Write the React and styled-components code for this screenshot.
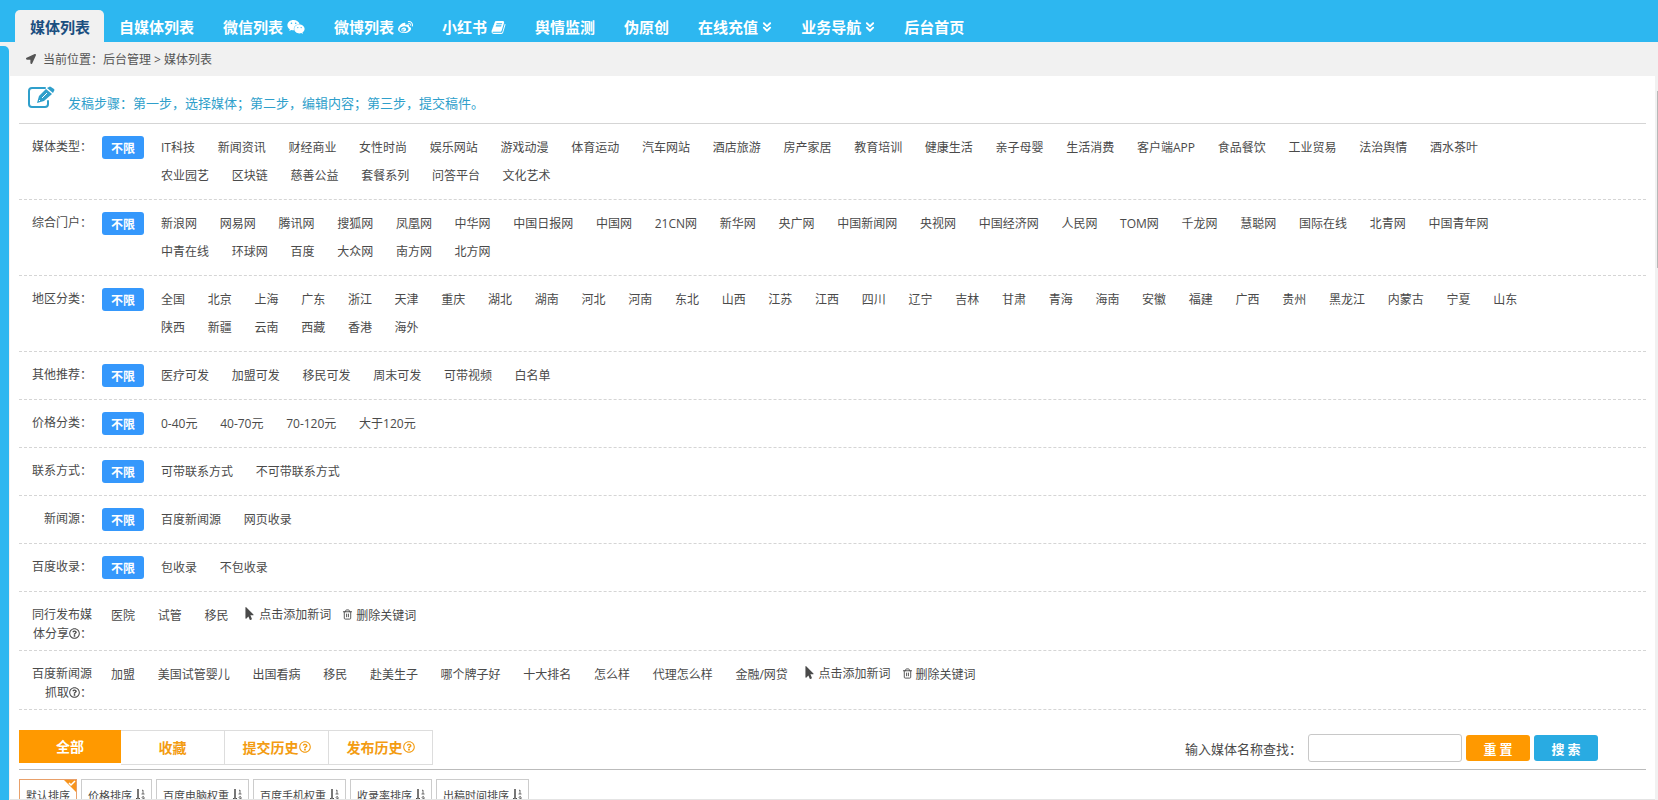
import React, { useState } from 'react'
import styled, { createGlobalStyle } from 'styled-components'
import { ChevronsDown, Trash2 } from 'lucide-react'
import {
  FaWeixin,
  FaWeibo,
  FaLocationArrow,
  FaRegQuestionCircle,
  FaMousePointer,
} from 'react-icons/fa'

const navItems = [
  { name: '媒体列表' },
  { name: '自媒体列表' },
  { name: '微信列表', icon: <FaWeixin size={18} /> },
  { name: '微博列表', icon: <FaWeibo size={15} /> },
  { name: '小红书', icon: <BookIcon /> },
  { name: '舆情监测' },
  { name: '伪原创' },
  { name: '在线充值', icon: <ChevronsDown size={10} strokeWidth={3} viewBox="4 4 16 16" /> },
  { name: '业务导航', icon: <ChevronsDown size={10} strokeWidth={3} viewBox="4 4 16 16" /> },
  { name: '后台首页' },
]

const filters = [
  {
    label: '媒体类型',
    items: 'IT科技 新闻资讯 财经商业 女性时尚 娱乐网站 游戏动漫 体育运动 汽车网站 酒店旅游 房产家居 教育培训 健康生活 亲子母婴 生活消费 客户端APP 食品餐饮 工业贸易 法治舆情 酒水茶叶 农业园艺 区块链 慈善公益 套餐系列 问答平台 文化艺术',
  },
  {
    label: '综合门户',
    items: '新浪网 网易网 腾讯网 搜狐网 凤凰网 中华网 中国日报网 中国网 21CN网 新华网 央广网 中国新闻网 央视网 中国经济网 人民网 TOM网 千龙网 慧聪网 国际在线 北青网 中国青年网 中青在线 环球网 百度 大众网 南方网 北方网',
  },
  {
    label: '地区分类',
    items: '全国 北京 上海 广东 浙江 天津 重庆 湖北 湖南 河北 河南 东北 山西 江苏 江西 四川 辽宁 吉林 甘肃 青海 海南 安徽 福建 广西 贵州 黑龙江 内蒙古 宁夏 山东 陕西 新疆 云南 西藏 香港 海外',
  },
  { label: '其他推荐', items: '医疗可发 加盟可发 移民可发 周末可发 可带视频 白名单' },
  { label: '价格分类', items: '0-40元 40-70元 70-120元 大于120元' },
  { label: '联系方式', items: '可带联系方式 不可带联系方式' },
  { label: '新闻源', items: '百度新闻源 网页收录' },
  { label: '百度收录', items: '包收录 不包收录' },
]

const keywordRows = [
  { label: '同行发布媒体分享', items: '医院 试管 移民' },
  { label: '百度新闻源抓取', items: '加盟 美国试管婴儿 出国看病 移民 赴美生子 哪个牌子好 十大排名 怎么样 代理怎么样 金融/网贷' },
]

const tabs = [
  { name: '全部' },
  { name: '收藏' },
  { name: '提交历史', help: true },
  { name: '发布历史', help: true },
]

const sorts = ['默认排序', '价格排序', '百度电脑权重', '百度手机权重', '收录率排序', '出稿时间排序']

function BookIcon() {
  return (
    <svg width="15" height="15" viewBox="0 0 1792 1792" fill="currentColor">
      <path d="M1703 478q40 57 18 129l-275 906q-19 64-76.5 107.5t-122.5 43.5h-923q-77 0-148.5-53.5t-99.5-131.5q-24-67-2-127 0-4 3-27t4-37q1-8-3-21.5t-3-19.5q2-11 8-21t16.5-23.5 16.500-23.500q23-38 45-91.500t30-91.500q3-10 .5-30t-.5-28q3-11 17-28t17-23q21-36 42-92t25-90q1-9-2.500-32t.5-28q4-13 22-30.500t22-22.500q19-26 42.500-84.500t27.500-96.500q1-8-3-25.500t-2-26.500q2-8 9-18t18-23 17-21q8-12 16.500-30.500t15-35 16-36 19.500-32 26.500-23.500 36-11.500 47.500 5.500l-1 3q38-9 51-9h761q74 0 114 56t18 130l-274 906q-36 119-71.500 153.500t-128.500 34.500h-869q-27 0-38 15-11 16-1 43 24 70 144 70h923q29 0 56-15.500t35-41.500l300-987q7-22 5-57 38 15 59 43zm-1064 2q-4 13 2 22.500t20 9.500h608q13 0 25.500-9.500t16.500-22.500l21-64q4-13-2-22.500t-20-9.500h-608q-13 0-25.500 9.500t-16.500 22.500zm-83 256q-4 13 2 22.500t20 9.500h608q13 0 25.500-9.500t16.500-22.500l21-64q4-13-2-22.500t-20-9.500h-608q-13 0-25.500 9.500t-16.500 22.500z" />
    </svg>
  )
}

function EditIcon() {
  return (
    <svg width="28" height="24" viewBox="0 0 28 24" fill="none" stroke="currentColor">
      <path d="M18 2H5Q2 2 2 5V18Q2 21 5 21H18Q21 21 21 18V15" strokeWidth="2" strokeLinecap="round" />
      <path d="M10 17L12 10L19 3L25 8L17 15Z" fill="currentColor" stroke="none" />
      <path d="M20 2L22 1Q23 0 24 1L27 3Q28 4 27 5L26 7Z" fill="currentColor" stroke="none" />
      <path d="M12 14L13 15M15 12L20 7" stroke="#fff" strokeWidth="1" />
    </svg>
  )
}

function SortIcon() {
  return (
    <svg width="10" height="12" viewBox="0 0 10 12" fill="none" stroke="currentColor">
      <path d="M3 0V11" strokeWidth="1.5" />
      <path d="M1 9L3 11L5 9" />
      <path d="M7 1.500L8 1V5M6.500 5H9.500" strokeWidth="0.8" />
      <path d="M9 9A1 1 0 1 1 9 8V10Q9 11.500 7 11.500" strokeWidth="0.8" />
    </svg>
  )
}

function FilterRow({ label, items }) {
  const [picked, setPicked] = useState('')

  return (
    <Row>
      <Label>{label}：</Label>
      <Badge type="button" onClick={() => setPicked('')}>不限</Badge>
      <Items>
        {items.split(' ').map((item) => (
          <React.Fragment key={item}>
            <Item href="#" $on={picked === item} onClick={() => setPicked(item)}>{item}</Item>{' '}
          </React.Fragment>
        ))}
      </Items>
    </Row>
  )
}

function KeywordRow({ label, items }) {
  return (
    <Row>
      <Label>{label}<FaRegQuestionCircle size={11} />：</Label>
      <Keywords>
        {items.split(' ').map((item) => (
          <React.Fragment key={item}>
            <Item href="#">{item}</Item>{' '}
          </React.Fragment>
        ))}
        <Action type="button"><FaMousePointer size={13} />点击添加新词</Action>
        <Action type="button"><Trash2 size={11} />删除关键词</Action>
      </Keywords>
    </Row>
  )
}

function App() {
  const [nav, setNav] = useState('媒体列表')
  const [tab, setTab] = useState('全部')
  const [sort, setSort] = useState('默认排序')
  const [word, setWord] = useState('')

  return (
    <Page>
      <GlobalStyle />
      <Nav>
        {navItems.map((n) => (
          <NavLink key={n.name} href="#" $active={nav === n.name} onClick={() => setNav(n.name)}>
            {n.name}
            {n.icon}
          </NavLink>
        ))}
      </Nav>
      <Body>
        <Side />
        <Main>
          <Crumbs>
            <FaLocationArrow size={10} />
            <span>当前位置：后台管理 &gt; 媒体列表</span>
          </Crumbs>
          <Scroller>
            <Content>
              <Notice>
                <EditIcon />
                <p>发稿步骤：第一步，选择媒体；第二步，编辑内容；第三步，提交稿件。</p>
              </Notice>
              {filters.map((f) => <FilterRow key={f.label} {...f} />)}
              {keywordRows.map((k) => <KeywordRow key={k.label} {...k} />)}
              <Toolbar>
                <Tabs>
                  {tabs.map((t) => (
                    <Tab key={t.name} type="button" $active={tab === t.name} onClick={() => setTab(t.name)}>
                      {t.name}
                      {t.help && <FaRegQuestionCircle size={12} />}
                    </Tab>
                  ))}
                </Tabs>
                <Search onSubmit={(e) => e.preventDefault()}>
                  <label htmlFor="word">输入媒体名称查找：</label>
                  <input id="word" type="text" value={word} onChange={(e) => setWord(e.target.value)} />
                  <SearchBtn type="button" $color="#ff9900" onClick={() => setWord('')}>重 置</SearchBtn>
                  <SearchBtn type="submit" $color="#29abe2">搜 索</SearchBtn>
                </Search>
              </Toolbar>
              <Sorts>
                {sorts.map((s, i) => (
                  <Sort key={s} type="button" $active={sort === s} onClick={() => setSort(s)}>
                    {s}
                    {i > 0 && <SortIcon />}
                    {sort === s && (
                      <Corner width="12" height="12" viewBox="0 0 12 12">
                        <path d="M0 0H12V12Z" fill="#f7941d" />
                        <path d="M5 3L7 5L11 1" fill="none" stroke="#fff" strokeWidth="1.5" />
                      </Corner>
                    )}
                  </Sort>
                ))}
              </Sorts>
            </Content>
            <Gutter><Thumb /></Gutter>
          </Scroller>
        </Main>
      </Body>
    </Page>
  )
}

export default App

const GlobalStyle = createGlobalStyle`
  * {
    box-sizing: border-box;
  }
  body {
    margin: 0;
    overflow: hidden;
  }
  body, button, input {
    font-family: "Noto Sans CJK SC", "Open Sans", sans-serif;
    font-size: 12px;
    color: #4a4a4a;
  }
  a {
    text-decoration: none;
  }
  button {
    cursor: pointer;
  }
`;
const Page = styled.div`
  height: 100vh;
  display: flex;
  flex-direction: column;
  background: #f1f1f1;
`;
const Nav = styled.nav`
  display: flex;
  flex: none;
  padding: 10px 15px 0;
  background: #2db7f0;
`;
const NavLink = styled.a`
  display: flex;
  align-items: center;
  gap: 4px;
  height: 32px;
  padding: 2px 14px 0 15px;
  border-radius: 5px 5px 0 0;
  font-size: 15px;
  line-height: 20px;
  font-weight: bold;
  white-space: nowrap;
  color: ${(p) => (p.$active ? '#1b4f80' : '#fff')};
  background: ${(p) => (p.$active ? '#f1f1f1' : 'transparent')};
`;
const Body = styled.div`
  flex: 1;
  min-height: 0;
  display: flex;
`;
const Side = styled.div`
  flex: none;
  width: 9px;
  margin-top: 4px;
  border-radius: 0 5px 0 0;
  background: #2db7f0;
`;
const Main = styled.main`
  flex: 1;
  min-width: 0;
  display: flex;
  flex-direction: column;
`;
const Crumbs = styled.div`
  flex: none;
  display: flex;
  align-items: center;
  gap: 7px;
  height: 34px;
  padding: 0 0 1px 17px;
  font-family: "Open Sans", "Noto Sans CJK SC", sans-serif;
  color: #555;
`;
const Scroller = styled.div`
  flex: 1;
  min-height: 0;
  display: flex;
`;
const Content = styled.div`
  flex: 1;
  min-width: 0;
  overflow: hidden;
  margin-left: 1px;
  padding: 0 9px;
  background: #fff;
  border-bottom: 1px solid #e4e4e4;
`;
const Gutter = styled.div`
  flex: none;
  width: 3px;
  padding: 15px 0 0 2px;
`;
const Thumb = styled.div`
  height: 25%;
  background: #b8b8b8;
`;
const Notice = styled.div`
  display: flex;
  gap: 13px;
  height: 48px;
  padding: 10px 8px 0;
  border-bottom: 1px solid #d5d5d5;
  color: #2f9fcb;
  p {
    margin: 7px 0 0;
    font-size: 13px;
    line-height: 20px;
  }
`;
const Row = styled.div`
  display: flex;
  align-items: flex-start;
  padding: 9px 0 8px 11px;
  border-bottom: 1px dashed #d5d5d5;
`;
const Label = styled.div`
  flex: none;
  width: 62px;
  padding-top: 3px;
  text-align: right;
  line-height: 19px;
  svg {
    vertical-align: -1px;
  }
`;
const Badge = styled.button`
  flex: none;
  width: 42px;
  height: 23px;
  margin: 3px 0 0 10px;
  padding: 0;
  border: 0;
  border-radius: 3px;
  font-weight: bold;
  line-height: 23px;
  color: #fff;
  background: #3598fc;
`;
const Items = styled.div`
  flex: 1;
  min-width: 0;
  margin: 0 106px 0 7px;
  padding-bottom: 2px;
  line-height: 28px;
`;
const Keywords = styled.div`
  flex: 1;
  min-width: 0;
  margin-left: 9px;
  line-height: 28px;
`;
const Item = styled.a`
  display: inline-block;
  padding: 0 10px;
  font-family: "Open Sans", "Noto Sans CJK SC", sans-serif;
  line-height: 24px;
  color: ${(p) => (p.$on ? '#3598fc' : '#4a4a4a')};
`;
const Action = styled.button`
  display: inline-flex;
  align-items: center;
  gap: 3px;
  margin-right: 9px;
  padding: 0 0 2px 2px;
  border: 0;
  background: none;
  line-height: 18px;
`;
const Toolbar = styled.div`
  display: flex;
  justify-content: space-between;
  height: 60px;
  padding: 20px 48px 0 0;
  border-bottom: 1px solid #bbb;
`;
const Tabs = styled.div`
  display: flex;
  align-items: flex-start;
`;
const Tab = styled.button`
  display: flex;
  align-items: center;
  justify-content: center;
  width: ${(p) => (p.$active ? '102px' : '104px')};
  height: ${(p) => (p.$active ? '33px' : '35px')};
  padding: 0 0 2px;
  border: solid #ddd;
  border-width: ${(p) => (p.$active ? '0' : '1px 1px 1px 0')};
  font-size: 14px;
  font-weight: bold;
  color: ${(p) => (p.$active ? '#fff' : '#f39c12')};
  background: ${(p) => (p.$active ? '#ff9900' : '#fff')};
`;
const Search = styled.form`
  display: flex;
  align-items: center;
  height: 36px;
  label {
    margin-right: 6px;
    font-size: 13px;
  }
  input {
    width: 154px;
    height: 28px;
    padding: 0 6px;
    border: 1px solid #c8c8c8;
    border-radius: 3px;
  }
`;
const SearchBtn = styled.button`
  width: 64px;
  height: 26px;
  margin-left: 4px;
  padding: 0;
  border: 0;
  border-radius: 3px;
  font-size: 13px;
  font-weight: bold;
  color: #fff;
  background: ${(p) => p.$color};
`;
const Sorts = styled.div`
  display: flex;
  gap: 4px;
  padding-top: 9px;
`;
const Sort = styled.button`
  position: relative;
  display: flex;
  align-items: center;
  gap: 3px;
  height: 32px;
  padding: 0 6px;
  border: 1px solid ${(p) => (p.$active ? '#e8a06a' : '#ccc')};
  font-size: 11px;
  white-space: nowrap;
  background: #fff;
`;
const Corner = styled.svg`
  position: absolute;
  top: 0;
  right: 0;
`;
